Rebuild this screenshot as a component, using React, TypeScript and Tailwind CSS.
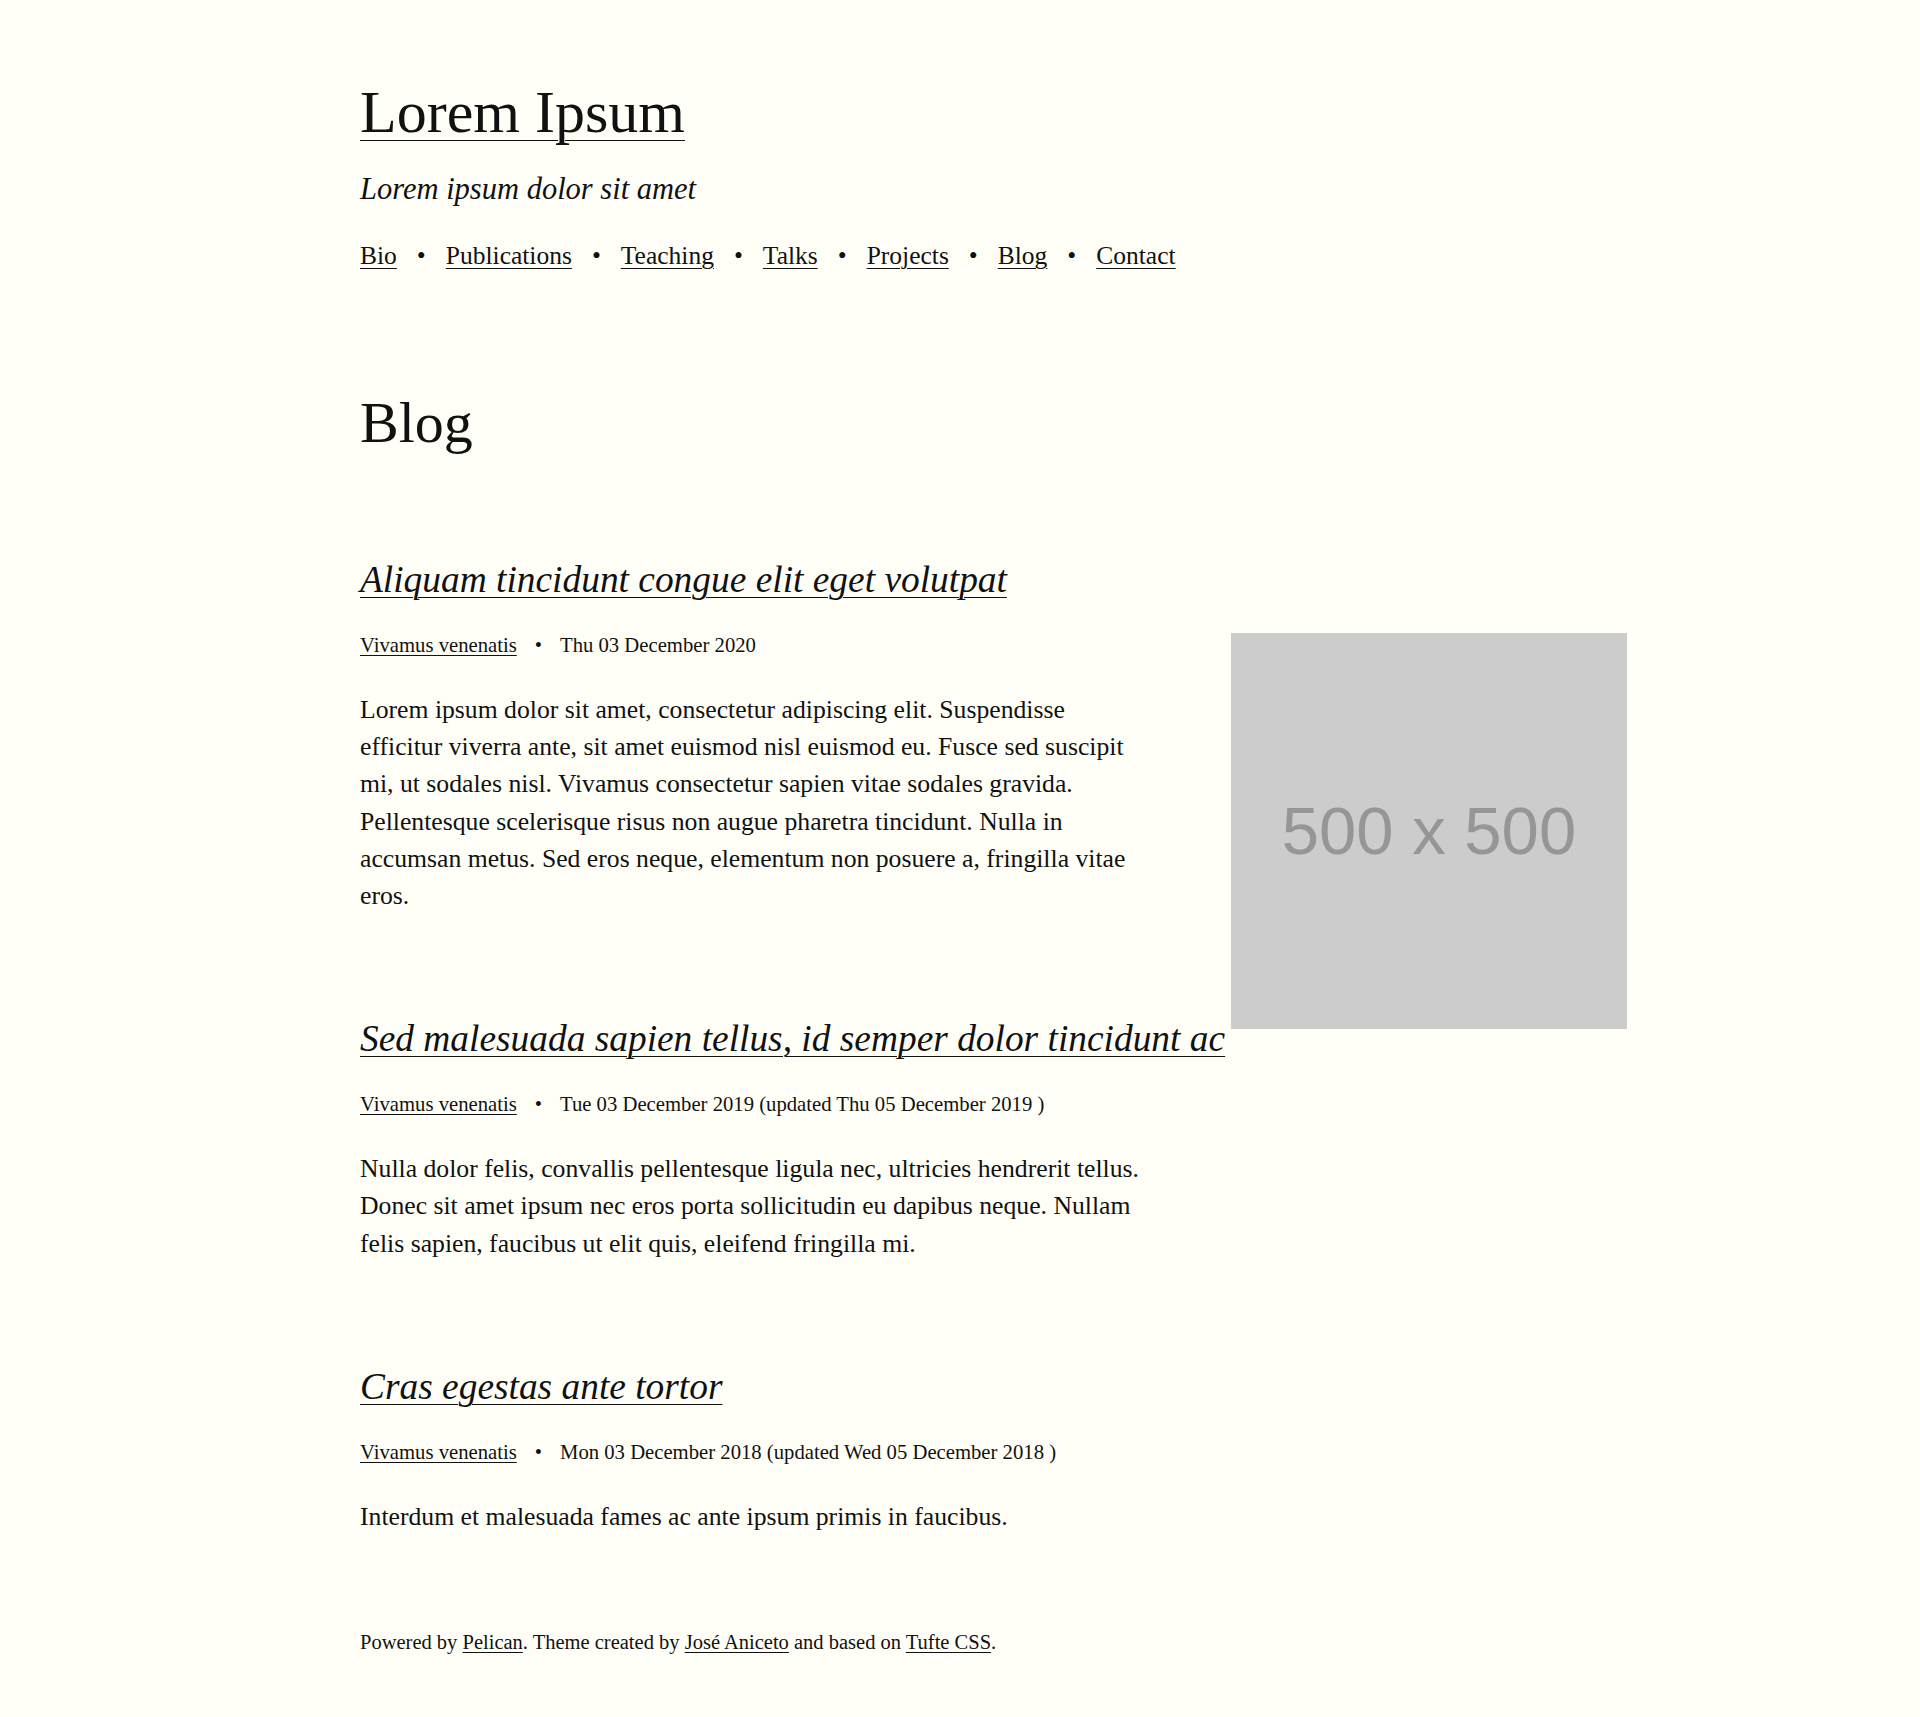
import React from 'react';

const navItems = ['Bio', 'Publications', 'Teaching', 'Talks', 'Projects', 'Blog', 'Contact'];

interface Post {
  title: string;
  date: string;
  body: string;
}

const posts: Post[] = [
  {
    title: 'Aliquam tincidunt congue elit eget volutpat',
    date: 'Thu 03 December 2020',
    body: 'Lorem ipsum dolor sit amet, consectetur adipiscing elit. Suspendisse efficitur viverra ante, sit amet euismod nisl euismod eu. Fusce sed suscipit mi, ut sodales nisl. Vivamus consectetur sapien vitae sodales gravida. Pellentesque scelerisque risus non augue pharetra tincidunt. Nulla in accumsan metus. Sed eros neque, elementum non posuere a, fringilla vitae eros.',
  },
  {
    title: 'Sed malesuada sapien tellus, id semper dolor tincidunt ac',
    date: 'Tue 03 December 2019 (updated Thu 05 December 2019 )',
    body: 'Nulla dolor felis, convallis pellentesque ligula nec, ultricies hendrerit tellus. Donec sit amet ipsum nec eros porta sollicitudin eu dapibus neque. Nullam felis sapien, faucibus ut elit quis, eleifend fringilla mi.',
  },
  {
    title: 'Cras egestas ante tortor',
    date: 'Mon 03 December 2018 (updated Wed 05 December 2018 )',
    body: 'Interdum et malesuada fames ac ante ipsum primis in faucibus.',
  },
];

const link = 'underline decoration-[1px] underline-offset-[5px]';
const smallLink = 'underline decoration-[1px] underline-offset-[3px]';

const Article: React.FC<{ post: Post; first: boolean }> = ({ post, first }) => (
  <article className={first ? '' : 'mt-[101px]'}>
    <h2 className="whitespace-nowrap text-[37.4px] leading-[48px] font-normal italic">
      <a href="#" className={link}>{post.title}</a>
    </h2>
    <div className="mt-[27px] flex gap-[18px] text-[20.7px] leading-[28px]">
      <a href="#" className={smallLink}>Vivamus venenatis</a>
      <span>•</span>
      <span>{post.date}</span>
    </div>
    <p className="mt-[32px] w-[790px] text-[25.7px] leading-[37.2px]">{post.body}</p>
  </article>
);

export default function App() {
  return (
    <div className="min-h-screen bg-[#fffff8] text-[#111111] font-['Liberation_Serif',serif]">
      <div className="pl-[360px] pt-[76px] pb-[60px]">
        {/* Site header */}
        <header>
          <h1 className="text-[60px] leading-[72px] font-normal">
            <a href="#" className="underline decoration-[1px] underline-offset-[8px]">Lorem Ipsum</a>
          </h1>
          <p className="mt-[21px] text-[30.5px] leading-[40px] italic">Lorem ipsum dolor sit amet</p>
          <nav className="mt-[29px] flex gap-[20px] text-[25.5px] leading-[36px]">
            {navItems.map((item, i) => (
              <React.Fragment key={item}>
                {i > 0 && <span>•</span>}
                <a href="#" className="underline decoration-[1px] underline-offset-[4px]">{item}</a>
              </React.Fragment>
            ))}
          </nav>
        </header>

        <h1 className="mt-[114px] text-[58px] leading-[70px] font-normal">Blog</h1>

        {/* Posts with margin figure */}
        <div className="mt-[98px] flex gap-[20px]">
          <div className="w-[851px] shrink-0">
            {posts.map((p, i) => (
              <Article key={p.title} post={p} first={i === 0} />
            ))}
          </div>
          <div className="mt-[77px] flex h-[396px] w-[396px] shrink-0 items-center justify-center bg-[#cccccc] font-['Liberation_Sans',sans-serif] text-[67px] text-[#969696]">
            500 x 500
          </div>
        </div>

        <footer className="mt-[93px] text-[20.5px] leading-[28px]">
          Powered by <a href="#" className={smallLink}>Pelican</a>. Theme created by{' '}
          <a href="#" className={smallLink}>José Aniceto</a> and based on{' '}
          <a href="#" className={smallLink}>Tufte CSS</a>.
        </footer>
      </div>
    </div>
  );
}
